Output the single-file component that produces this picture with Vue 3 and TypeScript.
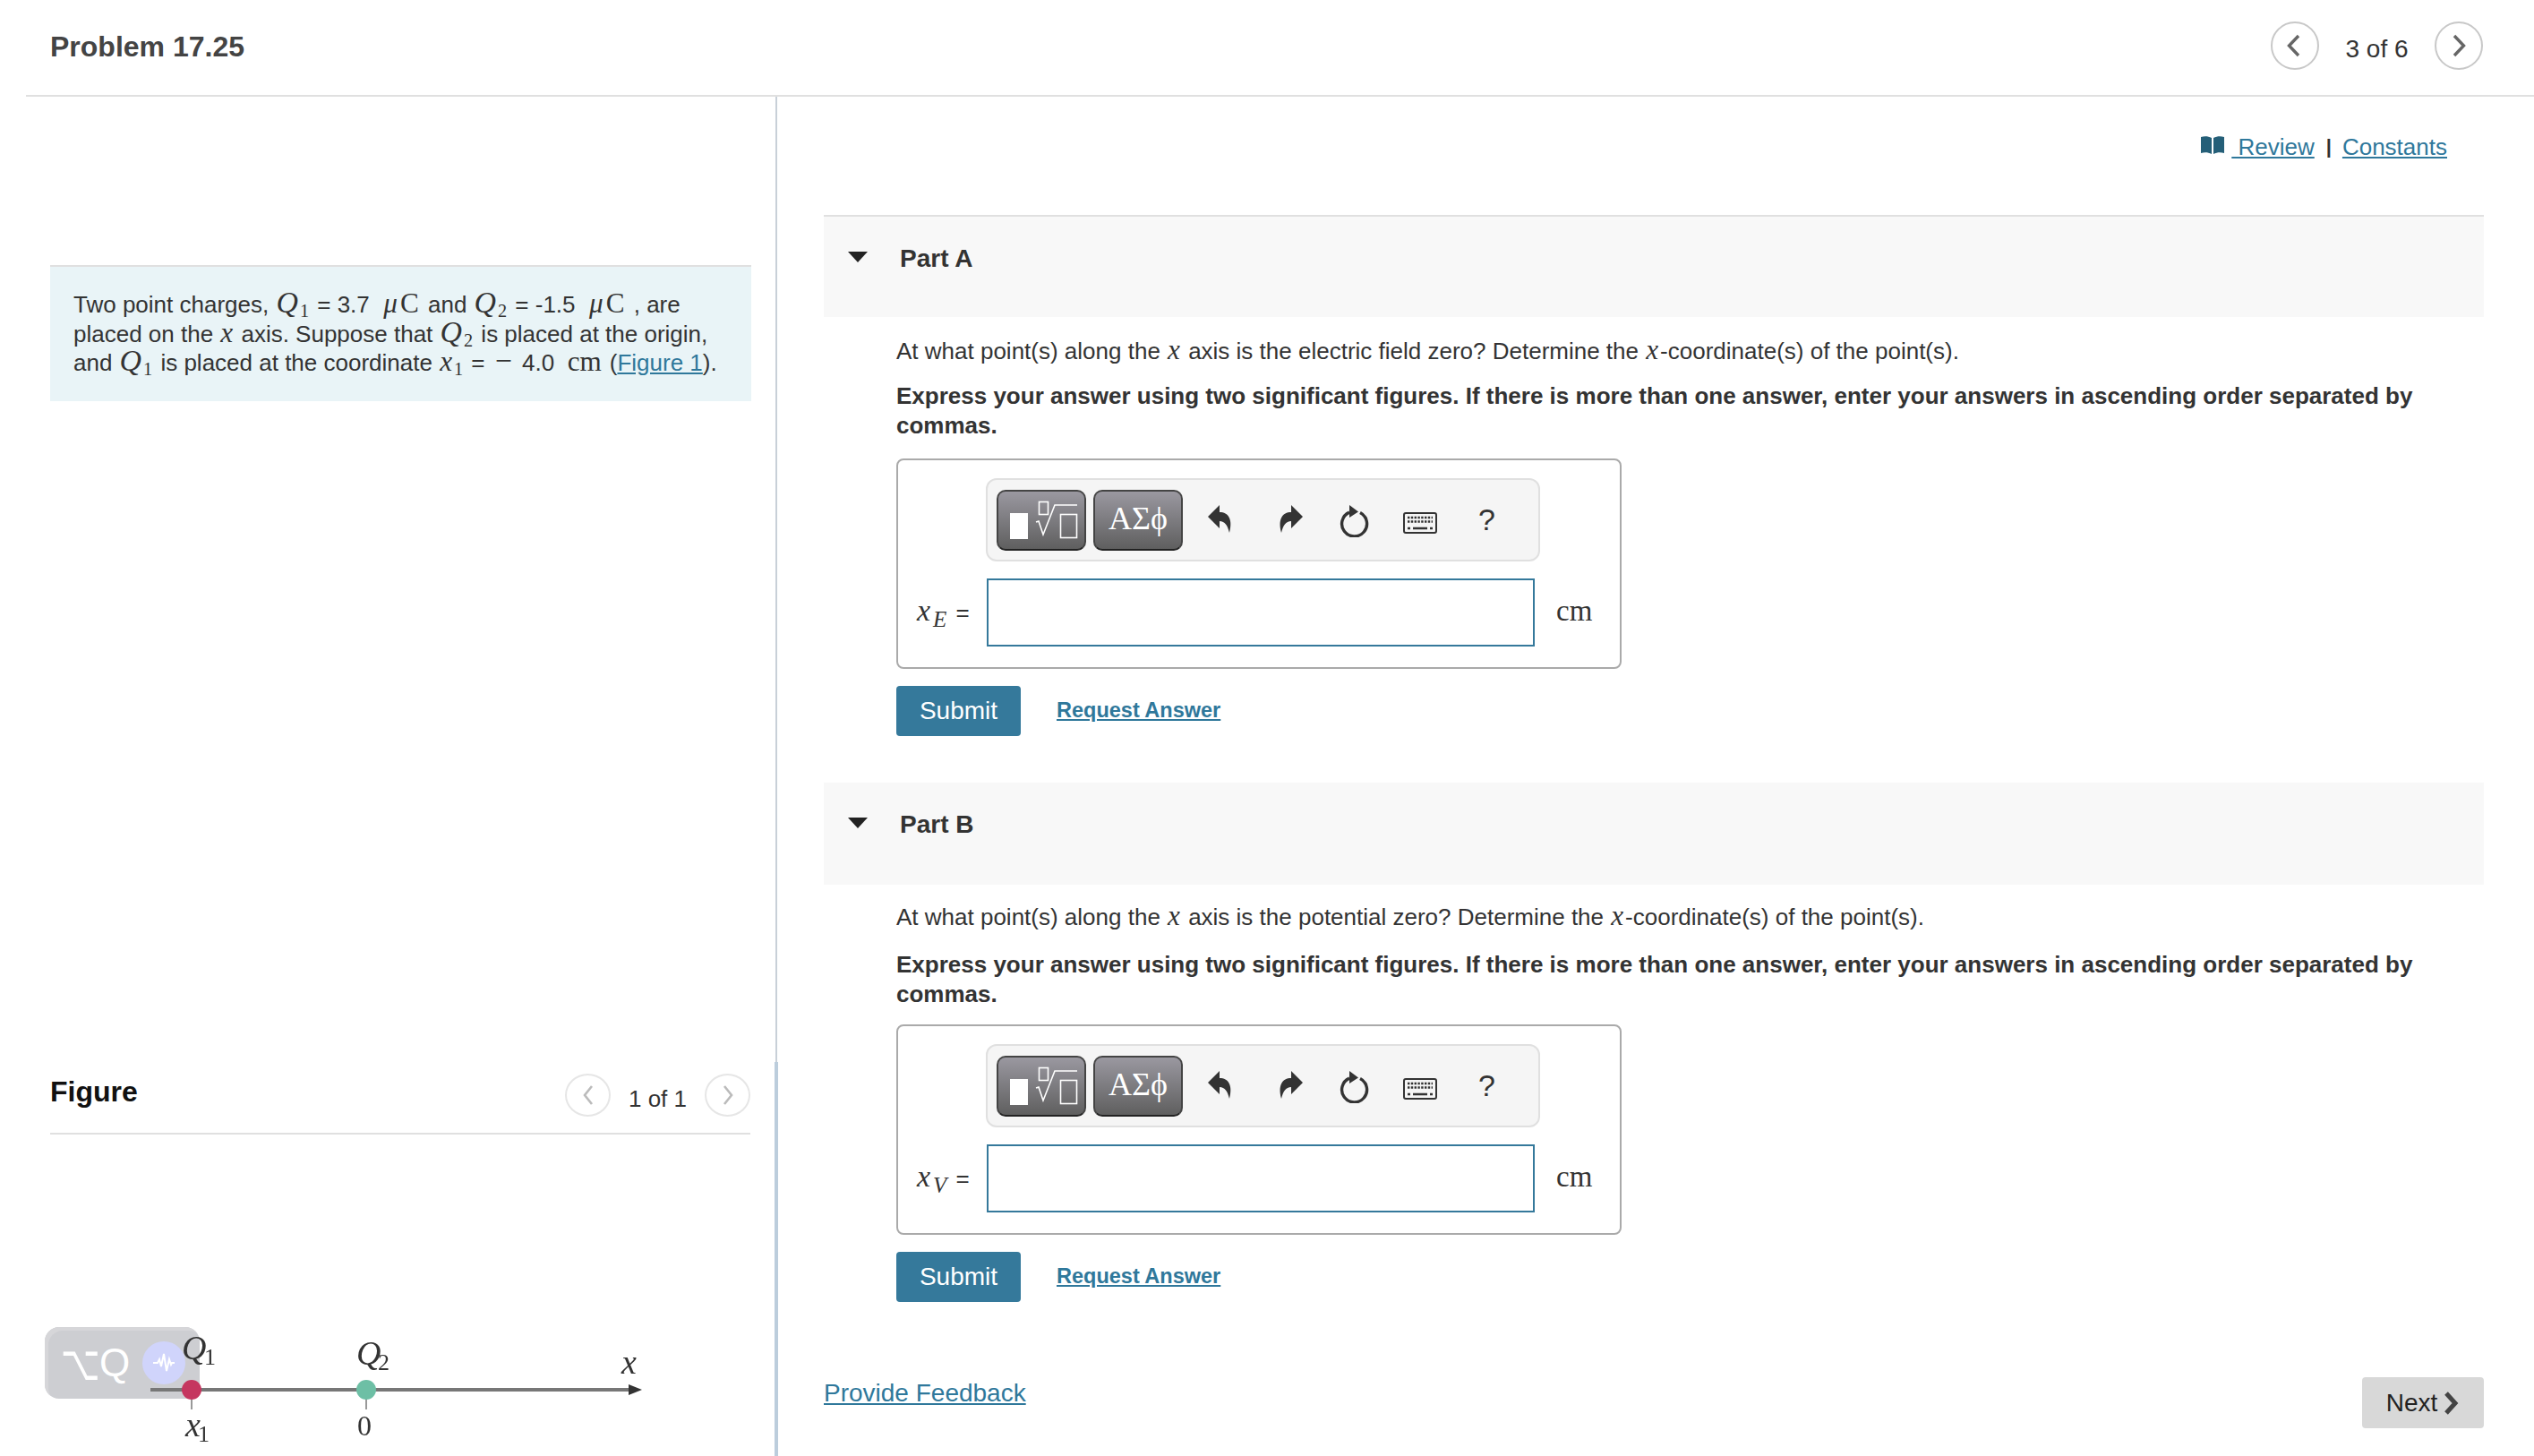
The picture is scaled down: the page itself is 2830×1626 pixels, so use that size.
<script setup lang="ts">
interface Part {
  key: string
  title: string
  question: string
  variable: string
  sub: string
}

const parts: Part[] = [
  { key: 'a', title: 'Part A', question: 'the electric field zero', variable: 'x', sub: 'E' },
  { key: 'b', title: 'Part B', question: 'the potential zero', variable: 'x', sub: 'V' }
]
</script>

<template>
  <div class="page">
    <header class="topbar">
      <h1 class="title">Problem 17.25</h1>
      <nav class="pager">
        <button class="circle" aria-label="Previous">
          <svg width="20" height="26" viewBox="0 0 20 26"><path d="M14 2 3.5 13 14 24" fill="none" stroke="#666" stroke-width="3.4" /></svg>
        </button>
        <span class="count">3 of 6</span>
        <button class="circle" aria-label="Next">
          <svg width="20" height="26" viewBox="0 0 20 26"><path d="M5 2 15.5 13 5 24" fill="none" stroke="#666" stroke-width="3.4" /></svg>
        </button>
      </nav>
    </header>

    <div class="columns">
      <aside class="left">
        <section class="prompt-wrap">
          <p class="prompt">
            Two point charges, <span class="m q">Q</span><sub>1</sub> = 3.7 &nbsp;<span class="m">μ</span><span class="r uc">C</span> and
            <span class="m q">Q</span><sub>2</sub> = -1.5 &nbsp;<span class="m">μ</span><span class="r uc">C</span> , are<br />
            placed on the <span class="m">x</span> axis. Suppose that <span class="m q">Q</span><sub>2</sub> is placed at the origin,<br />
            and <span class="m q">Q</span><sub>1</sub> is placed at the coordinate <span class="m">x</span><sub>1</sub> = <span class="r minus">−</span> 4.0 &nbsp;<span class="r">cm</span><span class="paren">(<a class="link">Figure 1</a>).</span>
          </p>
        </section>

        <section class="figure">
          <div class="fig-head">
            <h2 class="fig-title">Figure</h2>
            <div class="fig-nav">
              <span class="circle small">
                <svg width="16" height="24" viewBox="0 0 16 24"><path d="M12 2 4 12l8 10" fill="none" stroke="#bbb" stroke-width="2.6" /></svg>
              </span>
              <span class="fig-count">1 of 1</span>
              <span class="circle small">
                <svg width="16" height="24" viewBox="0 0 16 24"><path d="m4 2 8 10-8 10" fill="none" stroke="#bbb" stroke-width="2.6" /></svg>
              </span>
            </div>
          </div>

          <div class="hotkey">
            <span class="hotkey-opt">⌥</span><span class="hotkey-q">Q</span>
            <span class="hotkey-dot">
              <svg width="26" height="22" viewBox="0 0 26 22"><path d="M1 11h5l2-4 2 8 3-14 3 19 3-13 2 6 1-2h3" fill="none" stroke="#fff" stroke-width="2" /></svg>
            </span>
          </div>

          <svg class="diagram" width="860" height="156" viewBox="0 1470 860 156">
            <line x1="168" y1="1552" x2="708" y2="1552" stroke="#777" stroke-width="4" />
            <path d="M702 1546 717 1552 702 1558Z" fill="#333" />
            <line x1="214" y1="1552" x2="214" y2="1574" stroke="#999" stroke-width="2" />
            <line x1="409" y1="1552" x2="409" y2="1574" stroke="#999" stroke-width="2" />
            <ellipse cx="214" cy="1552" rx="11" ry="11" fill="#c5365f" />
            <ellipse cx="409" cy="1552" rx="11" ry="11" fill="#6dbfa5" />
            <text x="203" y="1518" class="dg">Q</text>
            <text x="228" y="1524" class="dgs">1</text>
            <text x="398" y="1524" class="dg">Q</text>
            <text x="422" y="1530" class="dgs">2</text>
            <text x="694" y="1534" class="dg">x</text>
            <text x="207" y="1604" class="dg">x</text>
            <text x="221" y="1610" class="dgs">1</text>
            <text x="399" y="1603" class="dgn">0</text>
          </svg>
        </section>
      </aside>

      <main class="right">
        <div class="links">
          <svg class="book" width="26" height="20" viewBox="0 0 26 20">
            <path d="M0 1c4-1 8-1 12 1v18c-4-2-8-2-12-1zM14 2c4-2 8-2 12-1v18c-4-1-8-1-12 1z" fill="#255f78" />
          </svg>
          <a class="link"><span>&nbsp;Review</span></a>
          <span class="sep">|</span>
          <a class="link">Constants</a>
        </div>

        <section v-for="part in parts" :key="part.key" class="part" :class="'part-' + part.key">
          <div class="part-head">
            <svg class="caret" width="22" height="12" viewBox="0 0 22 12"><path d="M0 0h22L11 12Z" fill="#222" /></svg>
            <h3 class="part-title">{{ part.title }}</h3>
          </div>
          <div class="part-body">
            <p class="question">
              At what point(s) along the <span class="m">x</span> axis is {{ part.question }}? Determine the
              <span class="m">x</span>-coordinate(s) of the point(s).
            </p>
            <p class="instr">
              Express your answer using two significant figures. If there is more than one answer, enter your answers in ascending order separated by commas.
            </p>

            <div class="answer">
              <div class="toolbar">
                <button class="tool" aria-label="Templates">
                  <svg width="96" height="64" viewBox="2 2 96 64">
                    <rect x="15" y="26" width="20" height="29" fill="#fff" />
                    <rect x="47.5" y="13.5" width="10" height="14" fill="none" stroke="#fff" stroke-width="1.6" />
                    <path d="M44 36l3-1 5 15 13-33h25" fill="none" stroke="#fff" stroke-width="1.6" />
                    <rect x="71.5" y="27.5" width="18" height="26" fill="none" stroke="#fff" stroke-width="1.6" />
                  </svg>
                </button>
                <button class="tool greek">ΑΣϕ</button>
                <svg class="ico undo" width="28" height="32" viewBox="0 0 28 32"><path d="M0 13 13 0v8c10 0 15 8 11 23-2-8-5-13-11-13v8Z" fill="#333" /></svg>
                <svg class="ico redo" width="28" height="32" viewBox="0 0 28 32"><path d="M28 13 15 0v8C5 8 0 16 4 31c2-8 5-13 11-13v8Z" fill="#333" /></svg>
                <svg class="ico reset" width="34" height="38" viewBox="0 0 34 38">
                  <path d="M23 10.5a14 14 0 1 1-12-.4" fill="none" stroke="#333" stroke-width="3.4" />
                  <path d="M11 2 21 9.5 11 16Z" fill="#333" />
                </svg>
                <svg class="ico kbd" width="38" height="24" viewBox="0 0 38 24">
                  <rect x="1" y="1" width="36" height="22" rx="2" fill="#f5f5f5" stroke="#333" stroke-width="2" />
                  <path d="M5 6h28M5 10.5h28" stroke="#333" stroke-width="2.4" stroke-dasharray="2.4 1.4" fill="none" />
                  <path d="M5 18h3M11 18h16M30 18h3" stroke="#333" stroke-width="2.4" fill="none" />
                </svg>
                <span class="help">?</span>
              </div>
              <div class="entry">
                <label class="var"><span class="m vx">{{ part.variable }}</span><sub class="m vsub">{{ part.sub }}</sub><span class="veq">=</span></label>
                <div class="input"></div>
                <span class="unit">cm</span>
              </div>
            </div>

            <div class="actions">
              <button class="submit">Submit</button>
              <a class="req">Request Answer</a>
            </div>
          </div>
        </section>

        <div class="foot">
          <a class="link feedback">Provide Feedback</a>
          <button class="next">
            Next
            <svg width="18" height="26" viewBox="0 0 18 26"><path d="M3 2l10 11L3 24" fill="none" stroke="#444" stroke-width="5" /></svg>
          </button>
        </div>
      </main>
    </div>
  </div>
</template>

<style>
html, body { margin: 0; background: #fff; }
</style>

<style scoped>
.page {
  width: 2830px;
  height: 1626px;
  overflow: hidden;
  font-family: "Liberation Sans", Arial, sans-serif;
  color: #333;
  font-size: 26px;
}
.topbar {
  height: 106px;
  margin-left: 29px;
  padding: 0 57px 0 27px;
  border-bottom: 2px solid #e0e0e0;
  display: flex;
  align-items: center;
  justify-content: space-between;
}
.title { margin: 0 0 2px; font-size: 32px; line-height: 40px; font-weight: 700; color: #444; }
.pager { display: flex; align-items: center; margin-top: -4px; }
.circle {
  box-sizing: border-box;
  width: 54px;
  height: 54px;
  border: 2px solid #c8c8c8;
  border-radius: 50%;
  background: #fff;
  padding: 0;
  display: flex;
  align-items: center;
  justify-content: center;
}
.count { width: 129px; text-align: center; font-size: 28px; line-height: 32px; margin-top: 8px; color: #333; }
.columns { display: grid; grid-template-columns: 868px 1fr; height: 1518px; }
.left { display: flex; flex-direction: column; }
.prompt-wrap {
  height: 1078px;
  box-sizing: border-box;
  padding: 188px 27px 0 56px;
  border-right: 2px solid #c8d0d8;
}
.prompt {
  margin: 0;
  height: 152px;
  box-sizing: border-box;
  padding: 26px 0 0 26px;
  border-top: 2px solid #e0e0e0;
  background: #e9f4f7;
  line-height: 32.5px;
  white-space: nowrap;
}
.m { font-family: "Liberation Serif", serif; font-style: italic; font-size: 1.2em; line-height: 0; padding: 0 2px 0 1px; }
.m.q { font-size: 1.3em; }
.r { font-family: "Liberation Serif", serif; font-size: 1.2em; line-height: 0; }
.uc { padding-left: 1px; padding-right: 3px; }
.minus { font-size: 1.3em; padding: 0 4px; }
.paren { margin-left: 9px; }
sub { font-size: 0.78em; line-height: 0; vertical-align: -0.25em; font-family: "Liberation Serif", serif; padding-right: 2px; }
.link { color: #2f789b; text-decoration: underline; }
.figure {
  flex: 1;
  position: relative;
  border-right: 4px solid #bccddc;
  margin-right: -1px;
}
.fig-head {
  box-sizing: border-box;
  height: 81px;
  margin: 0 27px 0 56px;
  padding-top: 13px;
  border-bottom: 2px solid #e0e0e0;
  display: flex;
  justify-content: space-between;
  align-items: flex-start;
}
.fig-title { margin: 0; font-size: 32px; line-height: 40px; font-weight: 700; color: #111; }
.fig-nav { display: flex; align-items: center; }
.circle.small { width: 51px; height: 48px; border-color: #e6e6e6; }
.fig-count { width: 105px; text-align: center; font-size: 26px; margin-top: 8px; }
.diagram { display: block; margin-top: 203px; filter: blur(0.5px); position: relative; }
.dg { font-family: "Liberation Serif", serif; font-style: italic; font-size: 38px; fill: #333; }
.dgs { font-family: "Liberation Serif", serif; font-size: 26px; fill: #333; }
.dgn { font-family: "Liberation Serif", serif; font-size: 32px; fill: #333; }
.hotkey {
  position: absolute;
  left: 50px;
  top: 296px;
  width: 173px;
  height: 80px;
  box-sizing: border-box;
  border-radius: 16px;
  background: #cdced2;
  box-shadow: inset 4px 4px 0 #d6d6d9;
  display: flex;
  align-items: center;
  padding-left: 18px;
}
.hotkey-opt {
  display: block;
  flex: none;
  width: 40px;
  margin-right: 3px;
  font-family: "DejaVu Sans", sans-serif;
  font-size: 38px;
  line-height: 1;
  color: #fff;
  transform: scale(1, 1.45);
  transform-origin: left center;
}
.hotkey-q {
  display: block;
  flex: none;
  width: 34px;
  font-family: "Liberation Sans", sans-serif;
  font-size: 44px;
  line-height: 1;
  color: #fff;
}
.hotkey-dot {
  margin-left: 14px;
  flex: none;
  width: 48px;
  height: 48px;
  border-radius: 50%;
  background: #d0d4fb;
  display: flex;
  align-items: center;
  justify-content: center;
}
.right { padding: 0 56px 0 52px; }
.links {
  height: 32px;
  margin: 40px 41px 60px 0;
  display: flex;
  justify-content: flex-end;
  align-items: center;
  line-height: 32px;
}
.book { margin-right: 8px; margin-top: -4px; }
.sep { margin: 0 12px 0 13px; font-size: 22px; font-weight: 700; }
.part-head {
  box-sizing: border-box;
  height: 114px;
  background: #f8f8f8;
  display: flex;
  align-items: flex-start;
  padding: 31px 0 0 27px;
}
.part-a .part-head { border-top: 2px solid #e0e0e0; }
.part-title { margin: 0 0 0 36px; font-size: 28px; font-weight: 700; color: #333; line-height: 32px; }
.caret { margin-top: 8px; }
.part-body { padding: 22px 0 0 81px; }
.part-b .part-body { padding-top: 20px; }
.question { margin: 0 0 18px; line-height: 32px; }
.instr { margin: 0 0 21px; line-height: 32.5px; font-weight: 700; color: #333; }
.part-b .question { margin-bottom: 21px; }
.part-b .instr { margin-bottom: 18px; }
.answer {
  box-sizing: border-box;
  width: 810px;
  height: 235px;
  border: 2px solid #aaa;
  border-radius: 8px;
  padding-top: 20px;
}
.toolbar {
  box-sizing: border-box;
  width: 619px;
  height: 93px;
  margin-left: 98px;
  background: #f5f5f5;
  border: 2px solid #e0e0e0;
  border-radius: 12px;
  padding-left: 10px;
  display: flex;
  align-items: center;
}
.tool {
  box-sizing: border-box;
  width: 100px;
  height: 68px;
  margin-right: 8px;
  padding: 0;
  border: 2px solid #444;
  border-bottom-color: #222;
  border-radius: 10px;
  background: linear-gradient(#9a98a0, #5f5f5f);
  display: flex;
  align-items: center;
  justify-content: center;
}
.greek { font-family: "Liberation Serif", serif; font-size: 36px; color: #fff; margin-right: 0; padding-bottom: 4px; }
.ico { flex: none; }
.undo { margin-left: 28px; margin-top: -2px; }
.redo { margin-left: 50px; margin-top: -2px; }
.reset { margin-left: 41px; }
.kbd { margin-left: 37px; margin-top: 6px; }
.help { margin-left: 46px; font-size: 34px; color: #333; line-height: 1; margin-top: -2px; }
.entry { display: flex; align-items: center; margin-top: 19px; padding-left: 21px; }
.var { width: 78px; white-space: nowrap; }
.vx { font-size: 34px; padding: 0 2px 0 0; }
.vsub { font-size: 25px; margin-left: 1px; padding: 0; vertical-align: -0.3em; }
.veq { margin-left: 10px; }
.input {
  box-sizing: border-box;
  width: 612px;
  height: 76px;
  border: 2px solid #35799b;
  background: #fff;
}
.unit { margin-left: 24px; font-family: "Liberation Serif", serif; font-size: 33px; margin-top: -4px; }
.actions { display: flex; align-items: center; margin-top: 19px; height: 56px; }
.submit {
  box-sizing: border-box;
  width: 139px;
  height: 56px;
  border: 0;
  border-radius: 4px;
  background: #35799b;
  color: #fff;
  font-family: "Liberation Sans", sans-serif;
  font-size: 28px;
}
.req { margin-left: 40px; font-size: 23.5px; font-weight: 700; color: #2f789b; text-decoration: underline; margin-top: -2px; }
.part-a { margin-bottom: 52px; }
.foot { display: flex; justify-content: space-between; align-items: flex-start; margin-top: 84px; }
.feedback { font-size: 28px; line-height: 36px; }
.next {
  box-sizing: border-box;
  width: 136px;
  height: 57px;
  border: 0;
  border-radius: 4px;
  background: #d8d8d8;
  color: #222;
  font-family: "Liberation Sans", sans-serif;
  font-size: 28px;
  display: flex;
  align-items: center;
  justify-content: center;
  gap: 7px;
  padding: 0;
}
</style>
